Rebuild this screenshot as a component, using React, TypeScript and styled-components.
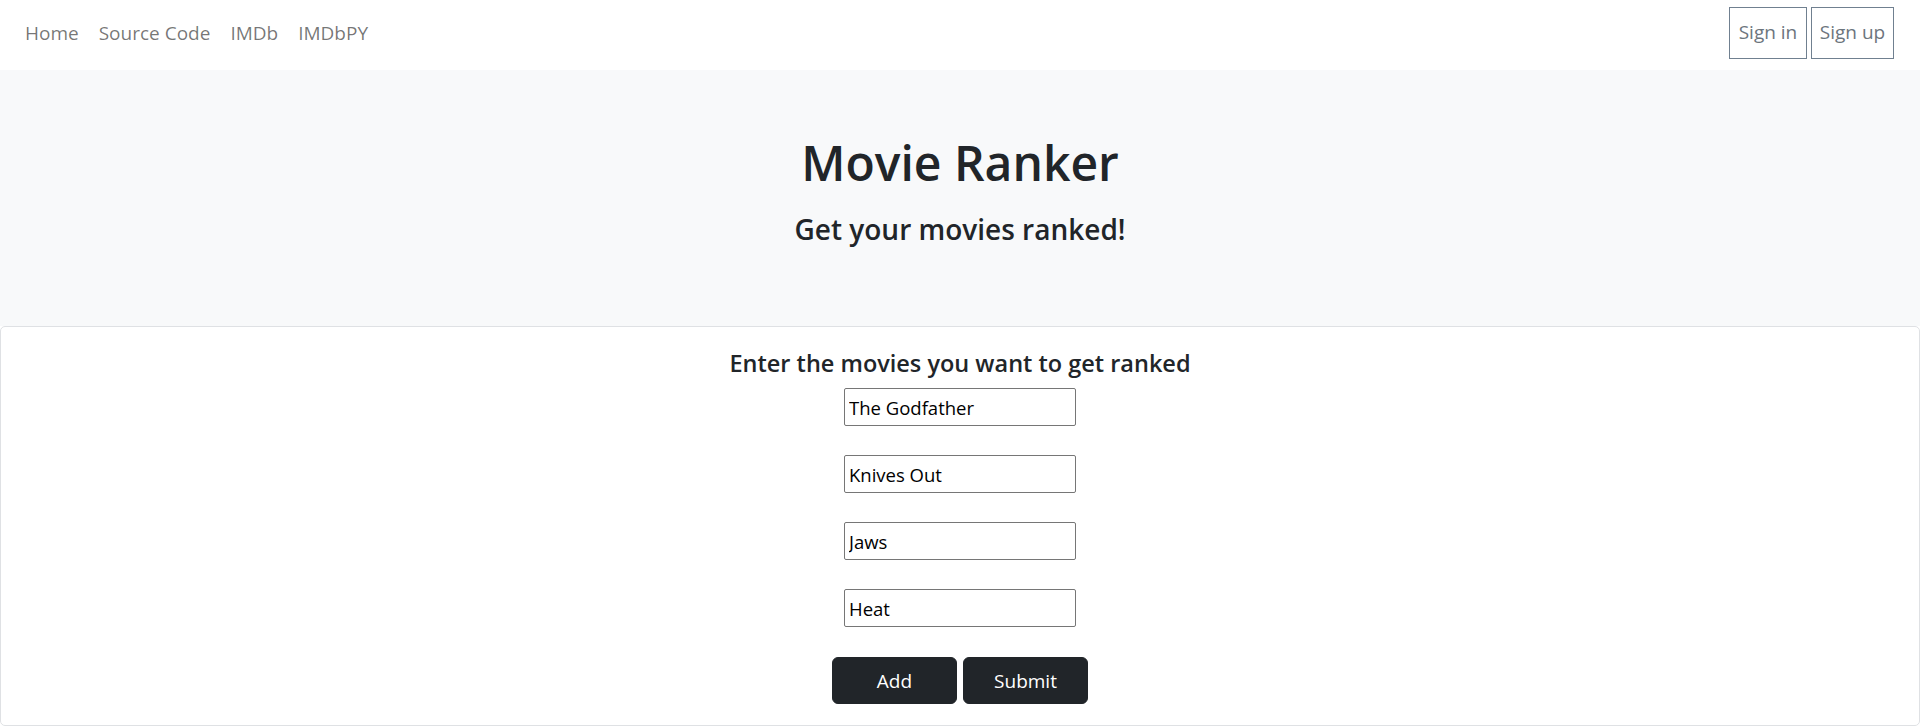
import React from "react";
import styled, { createGlobalStyle } from "styled-components";

const GlobalStyle = createGlobalStyle`
  html, body {
    margin: 0;
    padding: 0;
    background: #ffffff;
    font-family: "Open Sans", "Noto Sans", "Liberation Sans", sans-serif;
    color: #212529;
  }
  * { box-sizing: border-box; }
`;

const NavBar = styled.nav`
  height: 70px;
  padding: 0 26px 4px 15px;
  display: flex;
  align-items: center;
  justify-content: space-between;
  background: #ffffff;
`;

const NavLinks = styled.div`
  display: flex;
  align-items: center;
`;

const NavLink = styled.a`
  display: block;
  padding: 0 10px;
  font-size: 19px;
  line-height: 30px;
  color: rgba(0, 0, 0, 0.55);
  text-decoration: none;
  cursor: pointer;
`;

const AuthGroup = styled.div`
  display: flex;
  gap: 4px;
`;

const AuthButton = styled.button<{ $w: number }>`
  width: ${(p) => p.$w}px;
  height: 52px;
  padding: 0 0 2px;
  background: #ffffff;
  border: 1px solid #708090;
  border-radius: 0;
  font-family: inherit;
  font-size: 19px;
  color: #6c757d;
  cursor: pointer;
`;

const Hero = styled.header`
  background: #f8f9fa;
  padding: 60px 0 79px;
  text-align: center;
`;

const Title = styled.h1`
  margin: 0;
  font-size: 48px;
  line-height: 66px;
  font-weight: 550;
  color: #212529;
`;

const Subtitle = styled.h4`
  margin: 15px 0 0;
  font-size: 28px;
  line-height: 36px;
  font-weight: 600;
  color: #212529;
`;

const Card = styled.section`
  border: 1px solid #dfe1e4;
  border-radius: 5px;
  padding: 21px 20px 21px;
  display: flex;
  flex-direction: column;
  align-items: center;
  background: #ffffff;
`;

const CardTitle = styled.h5`
  margin: 0 0 10px;
  font-size: 23.5px;
  line-height: 30px;
  font-weight: 600;
  color: #212529;
`;

const InputList = styled.div`
  display: flex;
  flex-direction: column;
  gap: 29px;
`;

const MovieInput = styled.input`
  width: 232px;
  height: 38px;
  padding: 0 4px;
  border: 1px solid #767676;
  border-radius: 2px;
  font-family: inherit;
  font-size: 18.5px;
  color: #000000;
  background: #ffffff;
  outline: none;
`;

const ButtonRow = styled.div`
  margin-top: 30px;
  display: flex;
  gap: 6px;
`;

const DarkButton = styled.button`
  width: 125px;
  height: 47px;
  background: #212529;
  border: 1px solid #212529;
  border-radius: 6px;
  color: #ffffff;
  font-family: inherit;
  font-size: 19px;
  cursor: pointer;
`;

const movies = ["The Godfather", "Knives Out", "Jaws", "Heat"];

export default function App() {
  return (
    <>
      <GlobalStyle />
      <NavBar>
        <NavLinks>
          <NavLink>Home</NavLink>
          <NavLink>Source Code</NavLink>
          <NavLink>IMDb</NavLink>
          <NavLink>IMDbPY</NavLink>
        </NavLinks>
        <AuthGroup>
          <AuthButton $w={78}>Sign in</AuthButton>
          <AuthButton $w={83}>Sign up</AuthButton>
        </AuthGroup>
      </NavBar>
      <Hero>
        <Title>Movie Ranker</Title>
        <Subtitle>Get your movies ranked!</Subtitle>
      </Hero>
      <Card>
        <CardTitle>Enter the movies you want to get ranked</CardTitle>
        <InputList>
          {movies.map((m) => (
            <MovieInput key={m} type="text" defaultValue={m} />
          ))}
        </InputList>
        <ButtonRow>
          <DarkButton>Add</DarkButton>
          <DarkButton>Submit</DarkButton>
        </ButtonRow>
      </Card>
    </>
  );
}
